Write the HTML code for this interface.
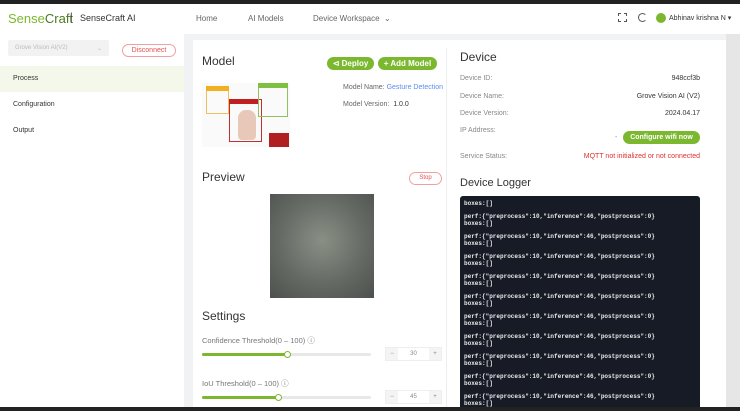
<!DOCTYPE html><html><head><style>
*{margin:0;padding:0;box-sizing:border-box}
body{width:740px;height:411px;overflow:hidden;background:#f1f2f3;font-family:"Liberation Sans",sans-serif;color:#333;position:relative}
.a{position:absolute}
.btn{position:absolute;background:#7cb82f;color:#fff;border-radius:10px;font-size:8px;font-weight:bold;text-align:center}
.lbl{font-size:7px;color:#888}
.val{font-size:7px;color:#333;text-align:right}
.log{font-family:"Liberation Mono",monospace;font-size:6px;font-weight:bold;color:#e8e8e8;line-height:7px}
</style></head><body>
<div class="a" style="left:0;top:0;width:740px;height:4px;background:#222"></div>
<div class="a" style="left:0;top:4px;width:740px;height:30px;background:#fff"></div>
<div class="a" style="left:8px;top:11px;font-size:13px;color:#7cb82f">Sense<span style="color:#4a7a20">Craft</span></div>
<div class="a" style="left:70px;top:12px;font-size:10px;color:#333">|</div>
<div class="a" style="left:80px;top:13px;font-size:9px;color:#333">SenseCraft AI</div>
<div class="a" style="left:196px;top:14px;font-size:8px;color:#666">Home</div>
<div class="a" style="left:248px;top:14px;font-size:8px;color:#666">AI Models</div>
<div class="a" style="left:313px;top:14px;font-size:8px;color:#666">Device Workspace &nbsp;⌄</div>
<div class="a" style="left:618px;top:13px;width:9px;height:9px;border:1px dashed #555"></div>
<div class="a" style="left:638px;top:13px;width:9px;height:9px;border:1px solid #555;border-radius:50%;border-right-color:transparent"></div>
<div class="a" style="left:656px;top:13px;width:10px;height:10px;border-radius:50%;background:#7cb82f"></div>
<div class="a" style="left:669px;top:14px;font-size:7px;color:#333">Abhinav krishna N ▾</div>
<div class="a" style="left:0;top:34px;width:184px;height:373px;background:#fff"></div>
<div class="a" style="left:8px;top:40px;width:101px;height:16px;background:#f2f2f2;border-radius:2px;font-size:6px;color:#bbb;padding:5px 7px">Grove Vision AI(V2) <span style="float:right">⌄</span></div>
<div class="a" style="left:122px;top:44px;width:54px;height:13px;border:1px solid #f0a0a0;border-radius:7px;font-size:7px;color:#e05050;text-align:center;line-height:11px">Disconnect</div>
<div class="a" style="left:0;top:66px;width:184px;height:26px;background:#f3f8ea"></div>
<div class="a" style="left:13px;top:75px;font-size:7px">Process</div>
<div class="a" style="left:13px;top:101px;font-size:7px">Configuration</div>
<div class="a" style="left:13px;top:127px;font-size:7px">Output</div>
<div class="a" style="left:193px;top:40px;width:533px;height:367px;background:#fff"></div>
<div class="a" style="left:446px;top:48px;width:1px;height:359px;background:#eee"></div>
<div class="a" style="left:726px;top:34px;width:14px;height:373px;background:#e6e6e6"></div>
<div class="a" style="left:202px;top:54px;font-size:12px">Model</div>
<div class="btn" style="left:327px;top:57px;width:47px;height:13px;line-height:13px">⊲ Deploy</div>
<div class="btn" style="left:378px;top:57px;width:59px;height:13px;line-height:13px">+ Add Model</div>
<div class="a" style="left:202px;top:83px;width:88px;height:64px;background:#fafafa"></div>
<div class="a" style="left:206px;top:86px;width:23px;height:28px;border:1px solid #f0c060"></div>
<div class="a" style="left:206px;top:86px;width:23px;height:5px;background:#f0b020"></div>
<div class="a" style="left:229px;top:99px;width:33px;height:43px;border:1px solid #c03030"></div>
<div class="a" style="left:229px;top:99px;width:30px;height:5px;background:#c02020"></div>
<div class="a" style="left:258px;top:83px;width:30px;height:34px;border:1px solid #90c060"></div>
<div class="a" style="left:258px;top:83px;width:30px;height:5px;background:#80c040"></div>
<div class="a" style="left:238px;top:110px;width:18px;height:30px;background:#e8c8b8;border-radius:8px 8px 4px 4px"></div>
<div class="a" style="left:269px;top:133px;width:20px;height:14px;background:#b02020"></div>
<div class="a" style="left:343px;top:84px;font-size:7px;color:#666">Model Name: <span style="color:#5b8def">Gesture Detection</span></div>
<div class="a" style="left:343px;top:101px;font-size:7px;color:#666">Model Version: &nbsp;<span style="color:#333">1.0.0</span></div>
<div class="a" style="left:202px;top:170px;font-size:12px">Preview</div>
<div class="a" style="left:409px;top:172px;width:33px;height:13px;border:1px solid #f0a0a0;border-radius:7px;font-size:6px;color:#e05050;text-align:center;line-height:11px">Stop</div>
<div class="a" style="left:270px;top:194px;width:104px;height:104px;background:radial-gradient(circle at 50% 45%,#8a8f85,#666a65 55%,#4d514d)"></div>
<div class="a" style="left:202px;top:309px;font-size:12px">Settings</div>
<div class="a" style="left:202px;top:335px;font-size:7.5px;color:#777">Confidence Threshold(0 – 100) ⓘ</div>
<div class="a" style="left:202px;top:353px;width:169px;height:3px;background:#e8e8e8;border-radius:2px"></div>
<div class="a" style="left:202px;top:353px;width:86px;height:3px;background:#7cb82f;border-radius:2px"></div>
<div class="a" style="left:284px;top:351px;width:7px;height:7px;border:1px solid #7cb82f;border-radius:50%;background:#fff"></div>
<div class="a" style="left:385px;top:347px;width:57px;height:14px;border:1px solid #eee;font-size:6px;color:#888;text-align:center;line-height:12px"><span style="float:left;width:12px;background:#f4f4f4">−</span>30<span style="float:right;width:12px;background:#f4f4f4">+</span></div>
<div class="a" style="left:202px;top:378px;font-size:7.5px;color:#777">IoU Threshold(0 – 100) ⓘ</div>
<div class="a" style="left:202px;top:396px;width:169px;height:3px;background:#e8e8e8;border-radius:2px"></div>
<div class="a" style="left:202px;top:396px;width:77px;height:3px;background:#7cb82f;border-radius:2px"></div>
<div class="a" style="left:275px;top:394px;width:7px;height:7px;border:1px solid #7cb82f;border-radius:50%;background:#fff"></div>
<div class="a" style="left:385px;top:390px;width:57px;height:14px;border:1px solid #eee;font-size:6px;color:#888;text-align:center;line-height:12px"><span style="float:left;width:12px;background:#f4f4f4">−</span>45<span style="float:right;width:12px;background:#f4f4f4">+</span></div>
<div class="a" style="left:460px;top:50px;font-size:12px">Device</div>
<div class="a lbl" style="left:460px;top:75px">Device ID:</div><div class="a val" style="right:40px;top:75px">948ccf3b</div>
<div class="a lbl" style="left:460px;top:93px">Device Name:</div><div class="a val" style="right:40px;top:93px">Grove Vision AI (V2)</div>
<div class="a lbl" style="left:460px;top:110px">Device Version:</div><div class="a val" style="right:40px;top:110px">2024.04.17</div>
<div class="a lbl" style="left:460px;top:127px">IP Address:</div>
<div class="a" style="left:615px;top:134px;font-size:7px;color:#888">-</div>
<div class="btn" style="left:623px;top:131px;width:77px;height:13px;line-height:13px;font-size:7px">Configure wifi now</div>
<div class="a lbl" style="left:460px;top:153px">Service Status:</div><div class="a val" style="right:40px;top:153px;color:#e03030">MQTT not initialized or not connected</div>
<div class="a" style="left:460px;top:177px;font-size:11px">Device Logger</div>
<div class="a" style="left:460px;top:196px;width:240px;height:215px;background:#161b26;border-radius:3px;padding:4px 4px">
<div class="log">boxes:[]</div>
<div class="log" style="margin-top:6px">perf:{"preprocess":10,"inference":46,"postprocess":0}<br>boxes:[]</div>
<div class="log" style="margin-top:6px">perf:{"preprocess":10,"inference":46,"postprocess":0}<br>boxes:[]</div>
<div class="log" style="margin-top:6px">perf:{"preprocess":10,"inference":46,"postprocess":0}<br>boxes:[]</div>
<div class="log" style="margin-top:6px">perf:{"preprocess":10,"inference":46,"postprocess":0}<br>boxes:[]</div>
<div class="log" style="margin-top:6px">perf:{"preprocess":10,"inference":46,"postprocess":0}<br>boxes:[]</div>
<div class="log" style="margin-top:6px">perf:{"preprocess":10,"inference":46,"postprocess":0}<br>boxes:[]</div>
<div class="log" style="margin-top:6px">perf:{"preprocess":10,"inference":46,"postprocess":0}<br>boxes:[]</div>
<div class="log" style="margin-top:6px">perf:{"preprocess":10,"inference":46,"postprocess":0}<br>boxes:[]</div>
<div class="log" style="margin-top:6px">perf:{"preprocess":10,"inference":46,"postprocess":0}<br>boxes:[]</div>
<div class="log" style="margin-top:6px">perf:{"preprocess":10,"inference":46,"postprocess":0}<br>boxes:[]</div>
</div>
<div class="a" style="left:0;top:407px;width:740px;height:4px;background:#222"></div>
</body></html>
